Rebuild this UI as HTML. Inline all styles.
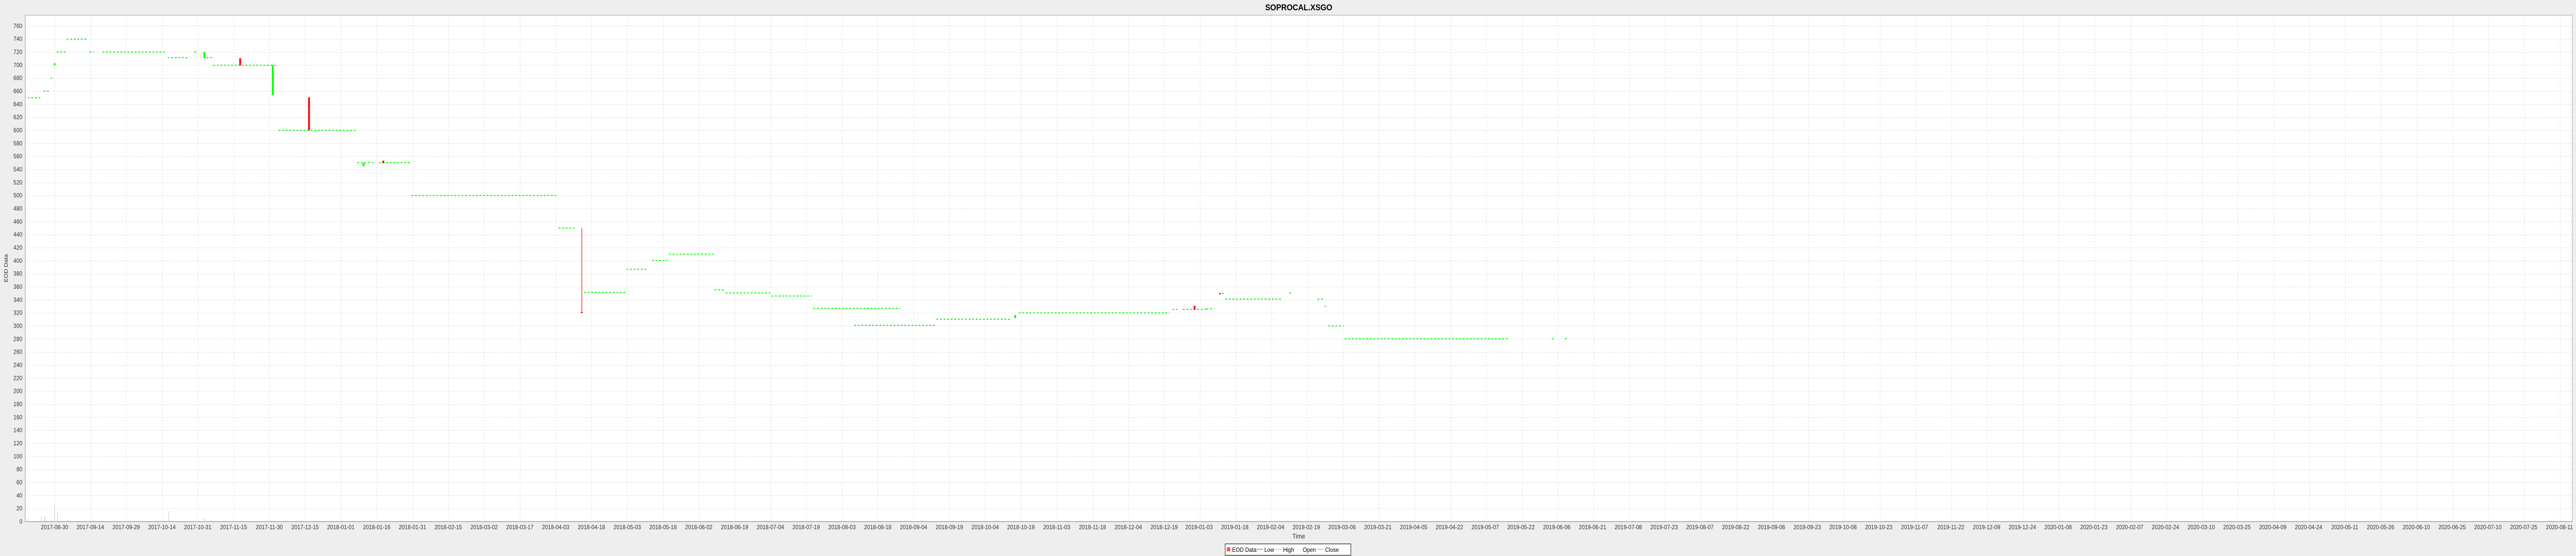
<!DOCTYPE html>
<html><head><meta charset="utf-8"><style>
html,body{margin:0;padding:0;background:#eeeeee;width:100%;height:100%;overflow:hidden}
svg{display:block;width:100vw;height:100vh}
text{font-family:"Liberation Sans",sans-serif;fill:#333}
.yl{font-size:12px;text-anchor:end}
.xl{font-size:12px;text-anchor:middle}
.g{stroke:#00ff00;stroke-width:2;stroke-dasharray:4 4;fill:none}
</style></head><body>
<svg viewBox="0 0 5760 1080" preserveAspectRatio="none" xmlns="http://www.w3.org/2000/svg">
<defs>
<pattern id="vg" patternUnits="userSpaceOnUse" x="122" y="0" width="80.03" height="6">
<line x1="0.5" y1="0" x2="0.5" y2="3" stroke="#d8d8d8" stroke-width="1"/></pattern>
<pattern id="hg" patternUnits="userSpaceOnUse" x="0" y="50.3" width="6" height="25.333">
<line x1="0" y1="0.5" x2="3" y2="0.5" stroke="#d8d8d8" stroke-width="1"/></pattern>
</defs>
<rect x="0" y="0" width="5760" height="1080" fill="#eeeeee"/>
<text x="2904" y="20" style="font-size:17px;font-weight:bold;text-anchor:middle;fill:#000">SOPROCAL.XSGO</text>
<rect x="56.5" y="29.5" width="5695" height="983.5" fill="#fff" stroke="#aaaaaa" stroke-width="1"/>
<rect x="57" y="30" width="5694" height="983" fill="url(#vg)"/>
<rect x="57" y="30" width="5694" height="983" fill="url(#hg)"/>
<line x1="56.5" y1="29" x2="56.5" y2="1014" stroke="#999" stroke-width="1"/>
<line x1="56" y1="1013.5" x2="5752" y2="1013.5" stroke="#999" stroke-width="1"/>
<text transform="translate(17,521) rotate(-90)" style="font-size:12px;text-anchor:middle">EOD Data</text>
<g class="yl">
<text x="50" y="1017">0</text><text x="50" y="991.7">20</text><text x="50" y="966.3">40</text><text x="50" y="941">60</text><text x="50" y="915.7">80</text><text x="50" y="890.3">100</text><text x="50" y="865">120</text><text x="50" y="839.7">140</text><text x="50" y="814.3">160</text><text x="50" y="789">180</text><text x="50" y="763.7">200</text><text x="50" y="738.3">220</text><text x="50" y="713">240</text><text x="50" y="687.7">260</text><text x="50" y="662.3">280</text><text x="50" y="637">300</text><text x="50" y="611.7">320</text><text x="50" y="586.3">340</text><text x="50" y="561">360</text><text x="50" y="535.7">380</text><text x="50" y="510.3">400</text><text x="50" y="485">420</text><text x="50" y="459.7">440</text><text x="50" y="434.3">460</text><text x="50" y="409">480</text><text x="50" y="383.7">500</text><text x="50" y="358.3">520</text><text x="50" y="333">540</text><text x="50" y="307.7">560</text><text x="50" y="282.3">580</text><text x="50" y="257">600</text><text x="50" y="231.7">620</text><text x="50" y="206.3">640</text><text x="50" y="181">660</text><text x="50" y="155.7">680</text><text x="50" y="130.3">700</text><text x="50" y="105">720</text><text x="50" y="79.7">740</text><text x="50" y="54.3">760</text>
</g>
<g class="xl">
<text x="122" y="1028">2017-08-30</text><text x="202" y="1028">2017-09-14</text><text x="282.1" y="1028">2017-09-29</text><text x="362.1" y="1028">2017-10-14</text><text x="442.1" y="1028">2017-10-31</text><text x="522.2" y="1028">2017-11-15</text><text x="602.2" y="1028">2017-11-30</text><text x="682.2" y="1028">2017-12-15</text><text x="762.2" y="1028">2018-01-01</text><text x="842.3" y="1028">2018-01-16</text><text x="922.3" y="1028">2018-01-31</text><text x="1002.3" y="1028">2018-02-15</text><text x="1082.4" y="1028">2018-03-02</text><text x="1162.4" y="1028">2018-03-17</text><text x="1242.4" y="1028">2018-04-03</text><text x="1322.5" y="1028">2018-04-18</text><text x="1402.5" y="1028">2018-05-03</text><text x="1482.5" y="1028">2018-05-18</text><text x="1562.5" y="1028">2018-06-02</text><text x="1642.6" y="1028">2018-06-19</text><text x="1722.6" y="1028">2018-07-04</text><text x="1802.6" y="1028">2018-07-19</text><text x="1882.7" y="1028">2018-08-03</text><text x="1962.7" y="1028">2018-08-18</text><text x="2042.7" y="1028">2018-09-04</text><text x="2122.8" y="1028">2018-09-19</text><text x="2202.8" y="1028">2018-10-04</text><text x="2282.8" y="1028">2018-10-19</text><text x="2362.8" y="1028">2018-11-03</text><text x="2442.9" y="1028">2018-11-18</text><text x="2522.9" y="1028">2018-12-04</text><text x="2602.9" y="1028">2018-12-19</text><text x="2681" y="1028">2019-01-03</text><text x="2761" y="1028">2019-01-18</text><text x="2841" y="1028">2019-02-04</text><text x="2921" y="1028">2019-02-19</text><text x="3001" y="1028">2019-03-06</text><text x="3081" y="1028">2019-03-21</text><text x="3161" y="1028">2019-04-05</text><text x="3241" y="1028">2019-04-22</text><text x="3321" y="1028">2019-05-07</text><text x="3401" y="1028">2019-05-22</text><text x="3481" y="1028">2019-06-06</text><text x="3561" y="1028">2019-06-21</text><text x="3641" y="1028">2019-07-08</text><text x="3721" y="1028">2019-07-23</text><text x="3801" y="1028">2019-08-07</text><text x="3881" y="1028">2019-08-22</text><text x="3961" y="1028">2019-09-06</text><text x="4041" y="1028">2019-09-23</text><text x="4121" y="1028">2019-10-08</text><text x="4201" y="1028">2019-10-23</text><text x="4281" y="1028">2019-11-07</text><text x="4362" y="1028">2019-11-22</text><text x="4442" y="1028">2019-12-09</text><text x="4522" y="1028">2019-12-24</text><text x="4602" y="1028">2020-01-08</text><text x="4682" y="1028">2020-01-23</text><text x="4762" y="1028">2020-02-07</text><text x="4842" y="1028">2020-02-24</text><text x="4922" y="1028">2020-03-10</text><text x="5002" y="1028">2020-03-25</text><text x="5082" y="1028">2020-04-09</text><text x="5162" y="1028">2020-04-24</text><text x="5243" y="1028">2020-05-11</text><text x="5323" y="1028">2020-05-26</text><text x="5403" y="1028">2020-06-10</text><text x="5483" y="1028">2020-06-25</text><text x="5563" y="1028">2020-07-10</text><text x="5643" y="1028">2020-07-25</text><text x="5723" y="1028">2020-08-11</text>
</g>
<text x="2904" y="1046" style="font-size:13px;text-anchor:middle">Time</text>
<rect x="2739.5" y="1056.5" width="281" height="22" fill="#fff" stroke="#000" stroke-width="1"/>
<rect x="2743" y="1063" width="8" height="8" fill="#ff5555"/>
<text x="2755" y="1072" style="font-size:12px;fill:#000">EOD Data</text>
<line x1="2810" y1="1067" x2="2824" y2="1067" stroke="#4444ff"/>
<text x="2827" y="1072" style="font-size:12px;fill:#000">Low</text>
<line x1="2850" y1="1067" x2="2866" y2="1067" stroke="#55ff55"/>
<text x="2869" y="1072" style="font-size:12px;fill:#000">High</text>
<line x1="2895" y1="1067" x2="2910" y2="1067" stroke="#ffff55"/>
<text x="2913" y="1072" style="font-size:12px;fill:#000">Open</text>
<line x1="2945" y1="1067" x2="2960" y2="1067" stroke="#ff55ff"/>
<text x="2963" y="1072" style="font-size:12px;fill:#000">Close</text>
<g fill="#dddddd">
<rect x="63" y="1007" width="2" height="6"/><rect x="92" y="1003" width="2" height="10"/><rect x="99" y="1003" width="2" height="10"/><rect x="114" y="1009" width="2" height="4"/><rect x="121" y="981" width="2" height="32"/><rect x="128" y="995" width="2" height="18"/><rect x="150" y="1009" width="2" height="4"/><rect x="202" y="1009" width="2" height="4"/><rect x="208" y="1010" width="2" height="3"/><rect x="376" y="993" width="2" height="20"/><rect x="456" y="1007" width="2" height="6"/><rect x="470" y="1009" width="2" height="4"/>
</g>
<g class="g">
<path d="M62 190H94M97 177H110M113 152H116M127 101H147M149 76H196M200 101H210M229 101H372M375 112H422M435 101H443M462 112H475M477 126.7H620M623 253H795M799 316H838M848 316H920M920 379.7H1245M1249 443H1284M1306 568H1398M1401 523H1448M1458 506H1493M1496 493.7H1595M1598 563H1620M1623 569H1722M1725 575H1815M1819 599H2013M1910 632H2094M2094 620H2260M2278 607.7H2615M2622 601H2633M2645 601H2700M2698 600H2715M2732 570H2738M2740 581H2866M2883 569H2890M2946 581H2960M2970 633H3004M3007 658H3372M3470 658H3474M3499 658H3503"/>
</g>
<rect x="120" y="123" width="4" height="4" fill="#00ff00"/>
<rect x="455" y="101" width="4" height="12" fill="#00ff00"/>
<rect x="535" y="113" width="4" height="14" fill="#ff0000"/>
<rect x="608" y="127" width="4" height="58" fill="#00ff00"/>
<rect x="689" y="189" width="4" height="64" fill="#ff0000"/>
<rect x="811" y="316" width="4" height="7" fill="#00ff00"/>
<rect x="855" y="312" width="4" height="5" fill="#ff0000"/>
<line x1="1301" y1="443" x2="1301" y2="607" stroke="#ff2222" stroke-width="1.5"/>
<rect x="1299" y="606" width="4" height="2" fill="#ff0000"/>
<rect x="2268" y="612" width="4" height="6" fill="#00ff00"/>
<rect x="2669" y="594" width="4" height="8" fill="#ff0000"/>
<rect x="2726" y="569" width="3" height="3" fill="#ff0000"/>
<rect x="2962" y="594" width="3" height="2" fill="#00ff00"/>
</svg>
</body></html>
